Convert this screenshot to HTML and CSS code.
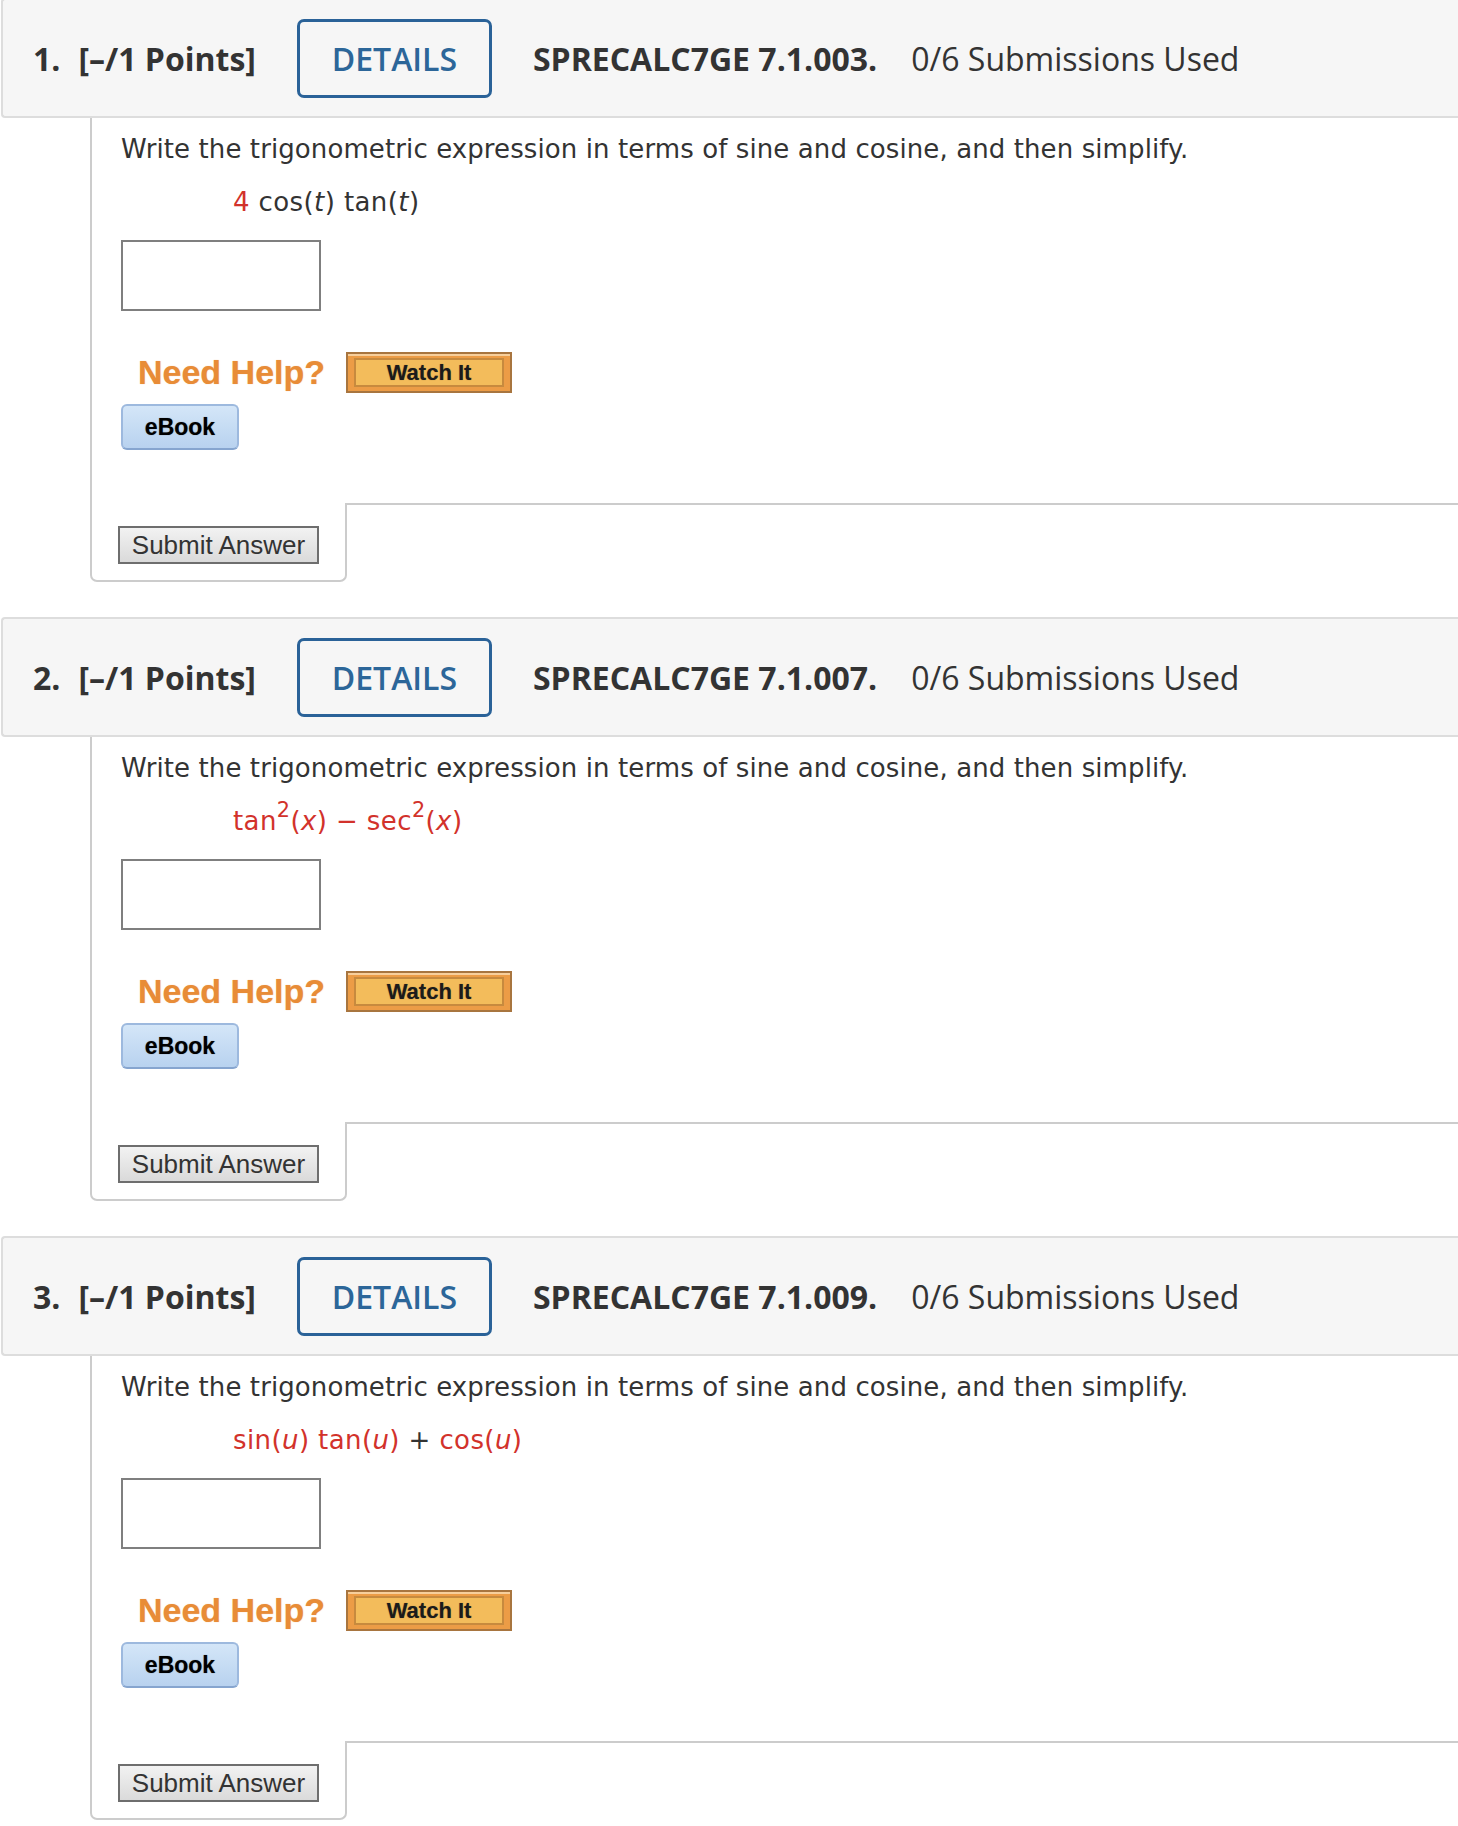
FILE: index.html
```html
<!DOCTYPE html>
<html lang="en">
<head>
  <meta charset="UTF-8">
  <meta name="viewport" content="width=device-width, initial-scale=1.0">
  <title>Assignment</title>
  <link rel="stylesheet" href="styles.css">
</head>
<body>
  <div id="questions">

    <div class="question">
      <div class="q-head">
        <span class="q-num">1.</span>
        <span class="q-points">[–/1 Points]</span>
        <button class="details">DETAILS</button>
        <span class="q-code">SPRECALC7GE 7.1.003.</span>
        <span class="q-subs">0/6 Submissions Used</span>
      </div>
      <div class="q-body">
        <p class="prompt">Write the trigonometric expression in terms of sine and cosine, and then simplify.</p>
        <p class="expr"><span class="red">4</span> cos(<i>t</i>) tan(<i>t</i>)</p>
        <div class="answer-box"></div>
        <div class="help">
          <span class="need-help">Need Help?</span>
          <span class="watch-it"><span>Watch It</span></span>
        </div>
        <span class="ebook">eBook</span>
      </div>
      <div class="q-foot">
        <button class="submit">Submit Answer</button>
      </div>
    </div>

    <div class="question">
      <div class="q-head">
        <span class="q-num">2.</span>
        <span class="q-points">[–/1 Points]</span>
        <button class="details">DETAILS</button>
        <span class="q-code">SPRECALC7GE 7.1.007.</span>
        <span class="q-subs">0/6 Submissions Used</span>
      </div>
      <div class="q-body">
        <p class="prompt">Write the trigonometric expression in terms of sine and cosine, and then simplify.</p>
        <p class="expr red">tan<sup>2</sup>(<i>x</i>) − sec<sup>2</sup>(<i>x</i>)</p>
        <div class="answer-box"></div>
        <div class="help">
          <span class="need-help">Need Help?</span>
          <span class="watch-it"><span>Watch It</span></span>
        </div>
        <span class="ebook">eBook</span>
      </div>
      <div class="q-foot">
        <button class="submit">Submit Answer</button>
      </div>
    </div>

    <div class="question">
      <div class="q-head">
        <span class="q-num">3.</span>
        <span class="q-points">[–/1 Points]</span>
        <button class="details">DETAILS</button>
        <span class="q-code">SPRECALC7GE 7.1.009.</span>
        <span class="q-subs">0/6 Submissions Used</span>
      </div>
      <div class="q-body">
        <p class="prompt">Write the trigonometric expression in terms of sine and cosine, and then simplify.</p>
        <p class="expr"><span class="red">sin(<i>u</i>) tan(<i>u</i>)</span> + <span class="red">cos(<i>u</i>)</span></p>
        <div class="answer-box"></div>
        <div class="help">
          <span class="need-help">Need Help?</span>
          <span class="watch-it"><span>Watch It</span></span>
        </div>
        <span class="ebook">eBook</span>
      </div>
      <div class="q-foot">
        <button class="submit">Submit Answer</button>
      </div>
    </div>

  </div>
</body>
</html>
```

FILE: styles.css
```css
body {
  margin: 0;
  background: #fff;
  color: #333;
  font-family: "DejaVu Sans", Verdana, sans-serif;
}

#questions {
  margin-top: -2px;
}

.question {
  margin-bottom: 35px;
}

/* header bar */
.q-head {
  display: flex;
  align-items: center;
  height: 116px;
  margin-left: 1px;
  padding-left: 30px;
  background: #f6f6f6;
  border: 2px solid #ddd;
  border-right: none;
  border-radius: 4px 0 0 4px;
  font-family: "Open Sans", sans-serif;
  font-size: 32px;
  color: #333;
}

.q-num {
  font-weight: 700;
  margin-right: 18px;
}

.q-points {
  font-weight: 700;
  margin-right: 41px;
}

.details {
  box-sizing: border-box;
  width: 195px;
  height: 79px;
  padding: 0;
  margin-right: 41px;
  background: transparent;
  border: 3px solid #2a6298;
  border-radius: 7px;
  font-family: "Open Sans", sans-serif;
  font-size: 32px;
  font-weight: 600;
  color: #2c6699;
}

.q-code {
  font-weight: 700;
  margin-right: 34px;
}

.q-subs {
  font-weight: 400;
}

/* question body */
.q-body {
  margin-left: 90px;
  padding: 16px 0 53px 29px;
  border-left: 2px solid #ccc;
  border-bottom: 2px solid #ccc;
  font-size: 26px;
  line-height: 30px;
}

.prompt {
  margin: 0;
  letter-spacing: 0.1px;
}

.expr {
  margin: 23px 0 0 112px;
  letter-spacing: 0.4px;
}

.expr sup {
  font-size: 0.8em;
  line-height: 0;
  vertical-align: 13px;
}

.red {
  color: #d2322b;
}

.answer-box {
  box-sizing: border-box;
  width: 200px;
  height: 71px;
  margin-top: 23px;
  border: 2px solid #7f7f7f;
  background: #fff;
}

.help {
  display: flex;
  align-items: center;
  margin: 41px 0 0 17px;
}

.need-help {
  font-family: "Liberation Sans", Arial, sans-serif;
  font-size: 34px;
  font-weight: 700;
  line-height: 41px;
  color: #e88c37;
  text-shadow: 0 0 1px rgba(232, 140, 55, 0.6);
  margin-right: 21px;
}

.watch-it {
  display: flex;
  box-sizing: border-box;
  width: 166px;
  height: 41px;
  padding: 4px 6px;
  background: #ec9c46;
  border: 2px solid #a8753f;
  box-shadow: inset 0 2px 0 #f7cf9c;
}

.watch-it span {
  flex: 1;
  border: 2px solid #c78a3e;
  background: #f3bc5b;
  font-family: "Liberation Sans", Arial, sans-serif;
  font-size: 22px;
  font-weight: 700;
  line-height: 26px;
  text-align: center;
  color: #1b1b1b;
  text-shadow: 0 0 1px rgba(0, 0, 0, 0.4);
}

.ebook {
  display: block;
  box-sizing: border-box;
  width: 118px;
  height: 46px;
  margin-top: 11px;
  border: 2px solid #9db9de;
  border-bottom-color: #86a5cf;
  border-radius: 6px;
  background: linear-gradient(#d4e6f8, #b8d2ef);
  font-family: "Liberation Sans", Arial, sans-serif;
  font-size: 23px;
  font-weight: 700;
  line-height: 42px;
  text-align: center;
  color: #000;
  text-shadow: 0 0 1px rgba(0, 0, 0, 0.5);
}

/* submit tab */
.q-foot {
  box-sizing: border-box;
  width: 257px;
  margin: -2px 0 0 90px;
  padding: 23px 0 16px 26px;
  background: #fff;
  border: 2px solid #ccc;
  border-top: none;
  border-radius: 0 0 7px 7px;
}

.submit {
  display: block;
  box-sizing: border-box;
  width: 201px;
  height: 38px;
  padding: 0;
  border: 2px solid #6e6e6e;
  border-radius: 0;
  background: linear-gradient(#f2f2f2, #dadada);
  font-family: "Liberation Sans", Arial, sans-serif;
  font-size: 26px;
  color: #333;
}
```
